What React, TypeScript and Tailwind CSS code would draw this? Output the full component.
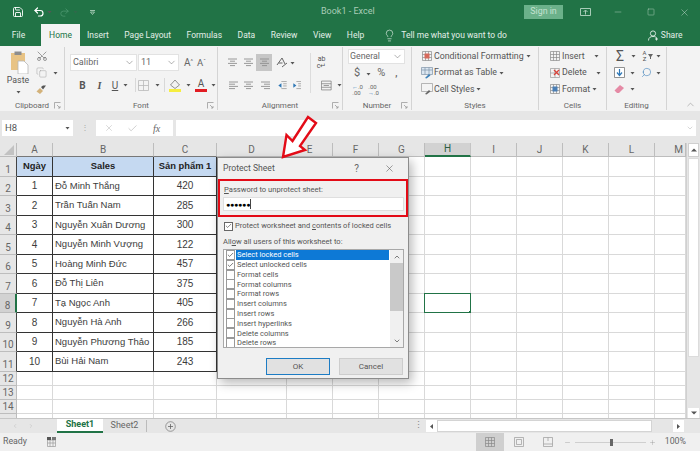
import React from "react";
import { Save, Undo2, Redo2, Lightbulb, Minus, Square, X, Scissors, Copy, Check, Search, Plus, ChevronDown, ChevronUp, ChevronRight, ChevronLeft } from "lucide-react";

const Caret = ({ className = "" }: { className?: string }) => (
  <svg width="5" height="4" viewBox="0 0 5 4" className={`shrink-0 ${className}`}><path d="M0.5 1h4L2.5 3.5z" fill="#555" /></svg>
);
const Launcher = () => (
  <svg width="7" height="7" viewBox="0 0 7 7" className="opacity-70"><path d="M0.5 6.5v-6h6M3 3l3 3M6 4v2H4" fill="none" stroke="#777" strokeWidth="0.8" /></svg>
);
const Lines = ({ kind, w = 11 }: { kind: "l" | "c" | "r"; w?: number }) => {
  const xs = kind === "l" ? [[1, 10], [1, 7], [1, 10], [1, 7]] : kind === "c" ? [[1, 10], [3, 8], [1, 10], [3, 8]] : [[1, 10], [4, 10], [1, 10], [4, 10]];
  return (
    <svg width={w} height="9" viewBox="0 0 11 9" className="shrink-0">
      {xs.map((x, i) => <path key={i} d={`M${x[0]} ${1 + i * 2.2}H${x[1]}`} stroke="#8f8f8f" strokeWidth="0.9" />)}
    </svg>
  );
};
const Group = ({ w, label, launcher, children, sep = true }: { w: string; label: string; launcher?: boolean; children: React.ReactNode; sep?: boolean }) => (
  <div className={`${w} flex flex-col shrink-0 h-[63px] ${sep ? "border-r border-[#d4d4d4]" : ""}`}>
    <div className="h-[54px] relative shrink-0">{children}</div>
    <div className="h-[9px] flex items-center relative">
      <span className="flex-1 text-center text-[8px] leading-none text-[#666]">{label}</span>
      {launcher && <span className="absolute right-[3px] top-[1px] flex"><Launcher /></span>}
    </div>
  </div>
);

const cols = ["A", "B", "C", "D", "E", "F", "G", "H", "I", "J", "K", "L", "M"];
const rows: [string, string, string][] = [
  ["1", "Đỗ Minh Thắng", "420"],
  ["2", "Trần Tuấn Nam", "285"],
  ["3", "Nguyễn Xuân Dương", "300"],
  ["4", "Nguyễn Minh Vượng", "122"],
  ["5", "Hoàng Minh Đức", "457"],
  ["6", "Đỗ Thị Liên", "375"],
  ["7", "Tạ Ngọc Anh", "405"],
  ["8", "Nguyễn Hà Anh", "266"],
  ["9", "Nguyễn Phương Thảo", "185"],
  ["10", "Bùi Hải Nam", "243"],
];
const perms: [string, boolean][] = [
  ["Select locked cells", true],
  ["Select unlocked cells", true],
  ["Format cells", false],
  ["Format columns", false],
  ["Format rows", false],
  ["Insert columns", false],
  ["Insert rows", false],
  ["Insert hyperlinks", false],
  ["Delete columns", false],
  ["Delete rows", false],
];

const rowNum = "flex items-end justify-center pb-[1px] text-[10px] leading-none text-[#666] border-r border-b";
const tableCell = "flex items-center border-r border-b border-[#333] font-['Liberation_Sans',sans-serif] text-[#3c3c3c]";

function Sheet() {
  const empties = (r: number) =>
    cols.slice(3).map((c) => {
      const sel = c === "H" && r === 8;
      return (
        <div key={c + r} className="relative border-r border-b border-[#d9d9d9] bg-white">
          {sel && (
            <div className="absolute -left-[1px] -top-[1px] -right-[1px] -bottom-[1px] border-[1.5px] border-[#217346]">
              <div className="absolute -right-[2px] -bottom-[2px] w-[3px] h-[3px] bg-[#217346]" />
            </div>
          )}
        </div>
      );
    });
  return (
    <div className="grid grid-cols-[17px_36px_101px_63px_70px_46px_46px_46px_46px_46px_46px_46px_46px_31px] grid-rows-[14px_repeat(11,19.5px)_14px_14px_14px_5px] flex-1 min-w-0 h-[275px] overflow-hidden bg-white">
      <div className="relative bg-[#e6e6e6] border-r border-b border-[#bdbdbd]">
        <svg width="11" height="10" viewBox="0 0 11 10" className="absolute right-[1px] bottom-[1px]"><path d="M10 0v10H0z" fill="#c2c2c2" /></svg>
      </div>
      {cols.map((c) => (
        <div key={c} className={`flex items-center text-[10px] leading-none ${c === "M" ? "justify-end pr-[2px]" : "justify-center"} border-r ${c === "H" ? "bg-[#d2d2d2] border-b-2 border-b-[#217346] border-r-[#c4c4c4] text-[#2d5f43]" : "bg-[#e6e6e6] border-b border-[#bdbdbd] text-[#666]"} ${c === "A" || c === "B" || c === "C" ? "border-b-[#777]" : ""}`}>{c}</div>
      ))}
      <div className={`${rowNum} bg-[#e6e6e6] border-[#444] border-b-[#bdbdbd]`}>1</div>
      <div className={`${tableCell} bg-[#c5d9f1] justify-center font-bold text-[9.4px] text-[#222]`}>Ngày</div>
      <div className={`${tableCell} bg-[#c5d9f1] justify-center font-bold text-[9.4px] text-[#222]`}>Sales</div>
      <div className={`${tableCell} bg-[#c5d9f1] justify-center font-bold text-[9.4px] text-[#222] whitespace-nowrap`}>Sản phẩm 1</div>
      {empties(1)}
      {rows.map((row, i) => (
        <React.Fragment key={row[0]}>
          <div className={`${rowNum} ${i === 6 ? "bg-[#d2d2d2] border-r-2 border-r-[#217346] text-[#2d5f43] border-b-[#bdbdbd]" : "bg-[#e6e6e6] border-[#444] border-b-[#bdbdbd]"}`}>{i + 2}</div>
          <div className={`${tableCell} bg-white text-[10px] justify-center`}>{row[0]}</div>
          <div className={`${tableCell} bg-white text-[9.5px] pl-[2px] whitespace-nowrap`}>{row[1]}</div>
          <div className={`${tableCell} bg-white text-[10px] justify-center`}>{row[2]}</div>
          {empties(i + 2)}
        </React.Fragment>
      ))}
      {[12, 13, 14, 15].map((r) => (
        <React.Fragment key={r}>
          <div className={`${rowNum} bg-[#e6e6e6] border-[#bdbdbd] overflow-hidden`}>{r === 15 ? "" : r}</div>
          {cols.slice(0, 3).map((c) => <div key={c + r} className="border-r border-b border-[#d9d9d9] bg-white" />)}
          {empties(r)}
        </React.Fragment>
      ))}
    </div>
  );
}

function VScroll() {
  return (
    <div className="w-[14px] h-[275px] bg-[#e6e6e6] flex flex-col border-l border-[#d0d0d0] shrink-0">
      <div className="h-[14px] flex items-center justify-center bg-white mx-[1px] border border-[#cfcfcf]"><svg width="6" height="4" viewBox="0 0 6 4"><path d="M3 0.5L6 3.5H0z" fill="#555" /></svg></div>
      <div className="h-[199px] mt-[1px] mx-[1px] bg-white border border-[#dcdcdc]" />
      <div className="flex-1" />
      <div className="h-[10px] flex items-center justify-center bg-white mx-[1px]"><svg width="6" height="4" viewBox="0 0 6 4"><path d="M3 3.5L6 0.5H0z" fill="#555" /></svg></div>
    </div>
  );
}

function Dialog() {
  return (
    <div className="absolute left-[217px] top-[157px] w-[192px] h-[222px] bg-[#f0f0f0] border border-[#8c8c8c] shadow-[3px_4px_10px_rgba(0,0,0,0.28)] flex flex-col text-[#555]">
      <div className="h-[21px] flex items-center pl-[5px] shrink-0">
        <span className="flex-1 text-[8.6px] text-[#555]">Protect Sheet</span>
        <span className="text-[10px] mr-[25px] text-[#666]">?</span>
        <X size={11} strokeWidth={1.2} color="#555" className="mr-[13px]" />
      </div>
      <div className="w-[190px] h-[38px] border-[2.5px] border-[#e30b17] pl-[3px] pr-[1px] flex flex-col shrink-0">
        <div className="h-[15px] pl-[1px] flex items-end text-[7.6px] leading-[12px] text-[#555]"><span><u>P</u>assword to unprotect sheet:</span></div>
        <div className="mt-[1px] h-[14px] w-[181px] bg-white border border-[#dfdfdf] flex items-center pl-[2px]">
          <span className="font-['Liberation_Sans',sans-serif] text-[7px] text-black tracking-[-0.2px] leading-none">●●●●●●</span>
          <span className="w-px h-[10px] bg-[#444]" />
        </div>
      </div>
      <div className="flex items-center mt-[3px] ml-[6px] h-[12px] shrink-0">
        <div className="w-[9px] h-[9px] border border-[#666] bg-white flex items-center justify-center"><Check size={8} strokeWidth={2} color="#333" /></div>
        <span className="ml-[2px] text-[7.5px] whitespace-nowrap">Protect worksheet and <u>c</u>ontents of locked cells</span>
      </div>
      <div className="ml-[5px] mt-[4px] h-[12px] flex items-center text-[7.6px] shrink-0"><span>All<u>o</u>w all users of this worksheet to:</span></div>
      <div className="ml-[5px] mt-[1px] w-[181px] h-[99px] bg-white border border-[#a8a8a8] flex shrink-0 overflow-hidden">
        <div className="flex-1 flex flex-col">
          {perms.map(([t, on], i) => (
            <div key={t} className="h-[9.8px] flex items-center pl-[2px] shrink-0">
              <div className="w-[9px] h-[10px] border border-[#999] bg-white flex items-center justify-center shrink-0">{on && <Check size={8} strokeWidth={2} color="#222" />}</div>
              <span className={`ml-[1px] flex-1 mr-[1px] h-[9.8px] flex items-center pl-[1px] text-[7.5px] leading-none whitespace-nowrap ${i === 0 ? "bg-[#0d79d6] text-white" : ""}`}>{t}</span>
            </div>
          ))}
        </div>
        <div className="w-[13px] bg-[#f0f0f0] flex flex-col items-center shrink-0">
          <div className="h-[13px] flex items-center"><ChevronUp size={8} strokeWidth={2} color="#444" /></div>
          <div className="h-[48px] w-full bg-[#c9c9c9]" />
          <div className="flex-1" />
          <div className="h-[13px] flex items-center"><ChevronDown size={8} strokeWidth={2} color="#444" /></div>
        </div>
      </div>
      <div className="flex ml-[48px] mt-[10px] gap-[9px] shrink-0">
        <div className="w-[64px] h-[17px] border-[1.5px] border-[#1d7cc4] bg-[#e1e1e1] flex items-center justify-center text-[8px]">OK</div>
        <div className="w-[64px] h-[17px] border-[1.5px] border-[#cdcdcd] bg-[#e1e1e1] flex items-center justify-center text-[8px]">Cancel</div>
      </div>
    </div>
  );
}

const StyleRow = ({ icon, text, caret = "ml-[2px]" }: { icon: React.ReactNode; text: string; caret?: string }) => (
  <div className="h-[16.5px] flex items-center">
    <span className="w-[13px] h-[12px] flex items-center justify-center shrink-0">{icon}</span>
    <span className="ml-[1px] text-[8.8px] text-[#555] whitespace-nowrap">{text}</span>
    <Caret className={caret} />
  </div>
);
const CellBoxes = ({ c = "#8a8a8a", accent }: { c?: string; accent?: string }) => (
  <svg width="12" height="12" viewBox="0 0 12 12">
    <path d="M1.5 1.5h9v9h-9zM1.5 4.5h9M1.5 7.5h9M4.5 1.5v9M7.5 1.5v9" fill="none" stroke={c} strokeWidth="0.7" />
    {accent && <rect x="3.5" y="3.5" width="5" height="5" fill={accent} />}
  </svg>
);

export default function App() {
  const tabs = ["Insert", "Page Layout", "Formulas", "Data", "Review", "View", "Help"];
  return (
    <div className="relative w-[700px] h-[451px] overflow-hidden flex flex-col bg-[#e6e6e6] font-['Roboto',sans-serif]">
      {/* title bar */}
      <div className="h-[24px] bg-[#217346] flex items-center shrink-0 text-[#cfe3d7] [&>*]:shrink-0">
        <Save size={12} strokeWidth={1.8} color="#fff" className="ml-[12px]" />
        <Undo2 size={12} strokeWidth={2.4} color="#fff" className="ml-[9px]" />
        <Caret className="ml-[2px] invert brightness-200" />
        <Redo2 size={11} strokeWidth={1.6} color="#4f9a72" className="ml-[7px]" />
        <Caret className="ml-[3px] opacity-30" />
        <svg width="7" height="7" viewBox="0 0 7 7" className="ml-[11px]"><path d="M1 1.5h5M1.5 3L3.5 5.5 5.5 3z" fill="none" stroke="#a9cdb8" strokeWidth="0.9" /></svg>
        <span className="w-[56px] ml-[225px] text-[9px] text-[#a9cdb8] whitespace-nowrap">Book1 - Excel</span>
        <span className="ml-[147px] w-[39px] h-[14px] bg-[#6bb18a] flex items-center justify-center text-[8.8px] text-[#c5e3d1]">Sign in</span>
        <svg width="11" height="8" viewBox="0 0 11 8" className="ml-[17px]"><path d="M0.5 0.5h10v7h-10zM5.5 6.5v-4M3.5 4l2-2 2 2" fill="none" stroke="#b7d6c4" strokeWidth="0.9" /></svg>
        <Minus size={10} strokeWidth={1} color="#cfe3d7" className="ml-[22px]" />
        <Square size={8} strokeWidth={1.2} color="#cfe3d7" className="ml-[24px]" />
        <X size={11} strokeWidth={1} color="#cfe3d7" className="ml-[24px]" />
      </div>
      {/* tabs */}
      <div className="h-[22px] bg-[#217346] flex items-end shrink-0 text-[8.5px] text-[#e3efe8] [&>*]:shrink-0">
        <span className="w-[41px] h-[22px] flex items-center justify-center pr-[4px]">File</span>
        <span className="w-[39px] h-[22px] bg-[#f3f3f3] flex items-center justify-center text-[#217346]">Home</span>
        <div className="h-[22px] flex items-center gap-[15.5px] ml-[7px] whitespace-nowrap">
          {tabs.map((t) => <span key={t}>{t}</span>)}
        </div>
        <div className="h-[22px] flex items-center ml-[19px]">
          <Lightbulb size={13} strokeWidth={1.2} color="#e3efe8" />
          <span className="ml-[5px] whitespace-nowrap">Tell me what you want to do</span>
        </div>
        <div className="h-[22px] flex items-center ml-[141px]">
          <svg width="11" height="11" viewBox="0 0 11 11"><circle cx="5" cy="3.5" r="2.6" fill="none" stroke="#e3efe8" strokeWidth="0.9" /><path d="M0.5 10.5c0-3 2-4 4.5-4s3 .6 3.5 1.4M8.5 7.5v3M7 9h3" fill="none" stroke="#e3efe8" strokeWidth="0.9" /></svg>
          <span className="ml-[2px]">Share</span>
        </div>
      </div>
      {/* ribbon */}
      <div className="h-[65px] bg-[#f3f3f3] flex items-start pt-[1px] shrink-0 relative">
        <Group w="w-[65px]" label="Clipboard" launcher>
          <div className="flex">
            <div className="w-[35px] flex flex-col items-center pl-[1px]">
              <svg width="20" height="23" viewBox="0 0 20 23" className="mt-[4px] ml-[3px]">
                <rect x="1" y="2" width="14" height="17" fill="#e8c384" />
                <rect x="4.5" y="0.5" width="7" height="3.5" fill="#8d8d8d" />
                <path d="M8 10h6l4 4v9H8z" fill="#fff" stroke="#b5b5b5" strokeWidth="0.8" />
              </svg>
              <span className="text-[8.8px] text-[#555] leading-[10px] mt-[1px]">Paste</span>
              <Caret className="mt-[5px]" />
            </div>
            <div className="flex flex-col items-start pt-[3px] ml-[1px]">
              <Scissors size={12} strokeWidth={1.1} color="#555" className="rotate-[-90deg]" />
              <div className="flex items-center mt-[5px]"><Copy size={11} strokeWidth={1} color="#9a9a9a" /><Caret className="ml-[6px]" /></div>
              <svg width="11" height="10" viewBox="0 0 11 10" className="mt-[7px]"><path d="M0.5 6.5L4 3l3 3-3 3z" fill="#d3b27a" /><path d="M5 2l2-1.5 3 0-3 4z" fill="#555" /></svg>
            </div>
          </div>
        </Group>
        <Group w="w-[153px]" label="Font" launcher>
          <div className="flex items-center mt-[7px] ml-[5px] h-[17px]">
            <div className="w-[67px] h-[17px] bg-white border border-[#e2e2e2] flex items-center pl-[2px] pr-[1px]"><span className="flex-1 text-[9px] text-[#666]">Calibri</span><ChevronDown size={11} strokeWidth={1} color="#555" /></div>
            <div className="w-[41px] ml-[1px] h-[17px] bg-white border border-[#e2e2e2] flex items-center pl-[2px] pr-[1px]"><span className="flex-1 text-[9px] text-[#666]">11</span><ChevronDown size={11} strokeWidth={1} color="#555" /></div>
            <span className="ml-[5px] text-[10px] text-[#666] leading-none whitespace-nowrap">A<sup className="text-[6px]">^</sup></span>
            <span className="ml-[4px] text-[9.5px] text-[#666] leading-none whitespace-nowrap">A<sup className="text-[6px]">ˇ</sup></span>
          </div>
          <div className="flex items-center mt-[6px] ml-[9px] h-[16px] text-[10px] text-[#555]">
            <span className="font-bold w-[17px] text-center">B</span>
            <span className="italic font-semibold w-[17px] text-center font-['Liberation_Serif',serif]">I</span>
            <span className="underline w-[14px] text-center">U</span>
            <Caret className="ml-[1px]" />
            <span className="w-px h-[14px] bg-[#d8d8d8] ml-[7px]" />
            <svg width="11" height="11" viewBox="0 0 11 11" className="ml-[2px]"><path d="M0.5 0.5h10v10h-10zM5.5 .5v10M.5 5.5h10" fill="none" stroke="#b9b9b9" strokeWidth="0.8" /></svg>
            <Caret className="ml-[6px]" />
            <span className="w-px h-[14px] bg-[#d8d8d8] ml-[4px]" />
            <svg width="12" height="13" viewBox="0 0 12 13" className="ml-[4px]"><path d="M6 1l4.5 5L6 9.5 1.5 6z" fill="#f2f2f2" stroke="#777" strokeWidth="0.8" /><rect x="0" y="10" width="12" height="3" fill="#f6ee3f" /></svg>
            <Caret className="ml-[5px]" />
            <span className="ml-[4px] w-[12px] h-[14px] border-b-[3px] border-[#e21c22] text-center text-[10px] leading-[11px] text-[#555]">A</span>
            <Caret className="ml-[4px]" />
          </div>
        </Group>
        <Group w="w-[125px]" label="Alignment" launcher>
          <div className="flex items-center h-[19px] mt-[6px] ml-[8px]">
            <span className="w-[12px] flex justify-center"><Lines kind="c" /></span>
            <span className="w-[12px] ml-[4px] flex justify-center"><Lines kind="c" /></span>
            <span className="w-[16px] h-[17px] ml-[2px] bg-[#c6c6c6] flex items-center justify-center"><Lines kind="c" /></span>
            <svg width="12" height="11" viewBox="0 0 12 11" className="ml-[4px]"><path d="M1 8L6 1l3 6M2.5 6h4M6 10l5-4" fill="none" stroke="#666" strokeWidth="1" /></svg>
            <Caret className="ml-[2px]" />
            <span className="w-px h-[40px] bg-[#dcdcdc] ml-[15px] self-start" />
            <span className="ml-[4px] text-[7px] leading-[7px] text-[#555] text-center w-[13px]">ab<br />c↵</span>
          </div>
          <div className="flex items-center h-[16px] mt-[5px] ml-[10px]">
            <Lines kind="l" />
            <span className="ml-[4px] flex"><Lines kind="c" /></span>
            <span className="ml-[6px] flex"><Lines kind="r" /></span>
            <svg width="11" height="11" viewBox="0 0 11 11" className="ml-[6px]"><path d="M5 1h6M7 3.5h4M7 6h4M5 9h6" stroke="#9a9a9a" strokeWidth="0.9" /><path d="M5 3v5L1.5 5.5z" fill="#2f78b6" /></svg>
            <svg width="11" height="11" viewBox="0 0 11 11" className="ml-[5px]"><path d="M5 1h6M7 3.5h4M7 6h4M5 9h6" stroke="#9a9a9a" strokeWidth="0.9" /><path d="M1.5 3v5L5 5.5z" fill="#2f78b6" /></svg>
            <svg width="12" height="11" viewBox="0 0 12 11" className="ml-[20px]"><path d="M.5.5h11v10h-11zM.5 3.5h11M.5 7.5h11M3 5.5h6" fill="none" stroke="#777" strokeWidth="0.8" /></svg>
            <Caret className="ml-[5px]" />
          </div>
        </Group>
        <Group w="w-[69px]" label="Number" launcher>
          <div className="ml-[5px] mt-[2px] w-[57px] h-[15px] bg-white border border-[#e2e2e2] flex items-center pr-[1px]"><span className="flex-1 text-[8.8px] text-[#666] pl-[1px]">General</span><ChevronDown size={11} strokeWidth={1} color="#555" /></div>
          <div className="flex items-center ml-[11px] h-[17px] mt-[1px] text-[11px] text-[#666]">
            <span>$</span><Caret className="ml-[6px]" /><span className="ml-[6px]">%</span><span className="ml-[10px] font-bold text-[9px]">,</span>
          </div>
          <div className="flex items-center ml-[9px] h-[14px] mt-[1px] text-[6px] leading-[6px] text-[#666] text-center">
            <span className="w-[9px]"><span className="text-[#2f78b6]">←</span>.0<br />.00</span>
            <span className="w-[9px] ml-[7px]">.00<br /><span className="text-[#2f78b6]">→</span>.0</span>
          </div>
        </Group>
        <Group w="w-[127px]" label="Styles">
          <div className="pl-[8px] pt-[1px]">
            <StyleRow text="Conditional Formatting" icon={<CellBoxes accent="#d76a5c" />} />
            <StyleRow text="Format as Table" icon={<svg width="12" height="12" viewBox="0 0 12 12"><path d="M.5.5h11v7h-11zM.5 3h11M4 .5v7M8 .5v7" fill="#dbe6f1" stroke="#7f93a8" strokeWidth="0.7" /><path d="M4 11l4-4 1.5 1.5-4 3z" fill="#3c80b8" /></svg>} />
            <StyleRow text="Cell Styles" icon={<svg width="12" height="12" viewBox="0 0 12 12"><path d="M.5.5h11v8h-11z" fill="#f4f4f4" stroke="#999" strokeWidth="0.7" /><path d="M4 11l4-4 1.5 1.5-4 3z" fill="#666" /></svg>} />
          </div>
        </Group>
        <Group w="w-[68px]" label="Cells">
          <div className="pl-[9px] pt-[1px]">
            <StyleRow text="Insert" caret="ml-[9px]" icon={<CellBoxes />} />
            <StyleRow text="Delete" caret="ml-[9px]" icon={<svg width="12" height="12" viewBox="0 0 12 12"><path d="M1.5 1.5h9v9h-9zM1.5 6h9M6 1.5v9" fill="none" stroke="#9a9a9a" strokeWidth="0.7" /><path d="M5 3l5 5M10 3L5 8" stroke="#d9433a" strokeWidth="1.3" /></svg>} />
            <StyleRow text="Format" icon={<CellBoxes accent="#4a7fb5" />} />
          </div>
        </Group>
        <Group w="w-[60px]" label="Editing">
          <div className="pl-[7px] pt-[1px] text-[#555]">
            <div className="flex items-center h-[16.5px]"><span className="w-[12px] text-center text-[14px] leading-none">Σ</span><Caret className="ml-[5px]" /><span className="ml-[6px] w-[5px] text-[6px] leading-[6px] text-center">A<br />Z</span><svg width="5" height="5" viewBox="0 0 5 5" className="ml-[1px]"><path d="M0 0h5L3 3v2H2V3z" fill="#666" /></svg><Caret className="ml-[3px]" /></div>
            <div className="flex items-center h-[16.5px]"><svg width="11" height="11" viewBox="0 0 11 11"><path d="M.5.5h10v10h-10z" fill="#fff" stroke="#777" strokeWidth="0.8" /><path d="M5.5 2v6M3 5.5l2.5 3 2.5-3" fill="none" stroke="#2f78b6" strokeWidth="1.2" /></svg><Caret className="ml-[5px]" /><Search size={11} strokeWidth={1.2} color="#2f78b6" className="ml-[6px] -scale-x-100" /><Caret className="ml-[4px]" /></div>
            <div className="flex items-center h-[16.5px]"><svg width="11" height="10" viewBox="0 0 11 10"><path d="M0.5 6.5L6 1l4 3-5 5H3z" fill="#e58aa5" /></svg><Caret className="ml-[5px]" /></div>
          </div>
        </Group>
        <ChevronUp size={11} strokeWidth={1} color="#777" className="absolute right-[4px] top-[53px]" />
      </div>
      {/* formula bar */}
      <div className="h-[32px] shrink-0 flex items-start pt-[9px] pl-[2px] bg-[#e6e6e6] pr-[4px]">
        <div className="w-[71px] h-[16px] bg-white flex items-center pl-[3px] pr-[3px]"><span className="flex-1 text-[9.5px] text-[#555]">H8</span><Caret /></div>
        <span className="w-[23px] h-[16px] flex items-center justify-center text-[8px] text-[#aaa] leading-none">⋮</span>
        <div className="w-[77px] h-[16px] bg-white flex items-center text-[#b5b5b5]">
          <X size={10} strokeWidth={1.2} className="ml-[8px]" />
          <Check size={11} strokeWidth={1.4} className="ml-[13px]" />
          <span className="ml-[15px] italic text-[10px] text-[#666] font-['Liberation_Serif',serif]">fx</span>
        </div>
        <div className="flex-1 h-[16px] ml-[3px] bg-white flex items-center justify-end pr-[2px]"><ChevronDown size={8} strokeWidth={1.4} color="#aaa" /></div>
      </div>
      {/* sheet */}
      <div className="h-[275px] flex shrink-0"><Sheet /><VScroll /></div>
      {/* sheet tabs */}
      <div className="h-[15px] flex items-stretch shrink-0 bg-[#e6e6e6] border-t border-[#c6c6c6] text-[9px] [&>*]:shrink-0">
        <div className="w-[57px] flex items-center">
          <ChevronLeft size={6} strokeWidth={2} color="#bbb" className="ml-[12px]" />
          <ChevronRight size={6} strokeWidth={2} color="#bbb" className="ml-[10px]" />
        </div>
        <span className="w-[46px] bg-white border-b-2 border-[#217346] flex items-center justify-center font-bold text-[#217346]">Sheet1</span>
        <span className="w-[44px] flex items-center justify-center text-[#666] border-r border-[#bbb] my-[1px]">Sheet2</span>
        <span className="ml-[18px] w-[11px] flex items-center justify-center"><svg width="11" height="11" viewBox="0 0 11 11"><circle cx="5.5" cy="5.5" r="4.8" fill="none" stroke="#777" strokeWidth="0.7" /><path d="M5.5 3v5M3 5.5h5" stroke="#666" strokeWidth="0.8" /></svg></span>
        <span className="ml-[240px] w-[4px] flex items-center justify-center text-[9px] text-[#888]">⋮</span>
        <div className="ml-[6px] w-[258px] flex items-center gap-0 h-[12px] mt-[1px] [&>*]:shrink-0">
          <span className="w-[11px] h-[12px] bg-white flex items-center justify-center"><svg width="3" height="5" viewBox="0 0 3 5"><path d="M3 0v5L0 2.5z" fill="#555" /></svg></span>
          <span className="w-[215px] h-[12px] bg-white border border-[#d4d4d4]" />
          <span className="w-[21px] h-[12px]" />
          <span className="w-[11px] h-[12px] bg-white flex items-center justify-center"><svg width="3" height="5" viewBox="0 0 3 5"><path d="M0 0v5L3 2.5z" fill="#555" /></svg></span>
        </div>
      </div>
      {/* status bar */}
      <div className="h-[18px] flex items-center shrink-0 bg-[#f0f0f0] text-[8.8px] text-[#666] [&>*]:shrink-0">
        <span className="ml-[3px]">Ready</span>
        <svg width="9" height="10" viewBox="0 0 9 10" className="ml-[20px]"><path d="M.5 3h8v6.5h-8zM.5 6h8M3 3v6.5M6 3v6.5" fill="none" stroke="#999" strokeWidth="0.7" /><rect x="0" y="0" width="4" height="3" fill="#555" /><rect x="5" y="0" width="4" height="3" fill="#777" /></svg>
        <span className="ml-auto w-[28px] h-[18px] bg-[#cfcfcf] flex items-center justify-center">
          <svg width="10" height="10" viewBox="0 0 10 10"><path d="M.5.5h9v9h-9zM.5 3.5h9M.5 6.5h9M3.5.5v9M6.5.5v9" fill="none" stroke="#888" strokeWidth="0.7" /></svg>
        </span>
        <svg width="10" height="10" viewBox="0 0 10 10" className="ml-[10px]"><path d="M.5.5h9v9h-9zM2.5 2.5h5v5h-5z" fill="none" stroke="#999" strokeWidth="0.7" /></svg>
        <svg width="10" height="10" viewBox="0 0 10 10" className="ml-[19px]"><path d="M.5.5h9v9h-9zM.5 7h9M5 .5V4" fill="none" stroke="#999" strokeWidth="0.7" /></svg>
        <Minus size={7} strokeWidth={1.2} color="#888" className="ml-[11px]" />
        <div className="ml-[4px] w-[71px] h-[7px] relative flex items-center"><div className="w-full h-px bg-[#cfcfcf]" /><div className="absolute left-[35px] top-0 w-[3px] h-[7px] bg-[#666]" /></div>
        <Plus size={7} strokeWidth={1.2} color="#888" className="ml-[3px]" />
        <span className="ml-[9px] mr-[14px]">100%</span>
      </div>
      <Dialog />
      <svg width="42" height="50" viewBox="0 0 42 50" className="absolute left-[278px] top-[113px]">
        <path d="M5 44L8.5 22 14.5 28 30 4 38 10 22 33 27 37z" fill="#fff" stroke="#e30b17" strokeWidth="2.4" />
      </svg>
    </div>
  );
}
